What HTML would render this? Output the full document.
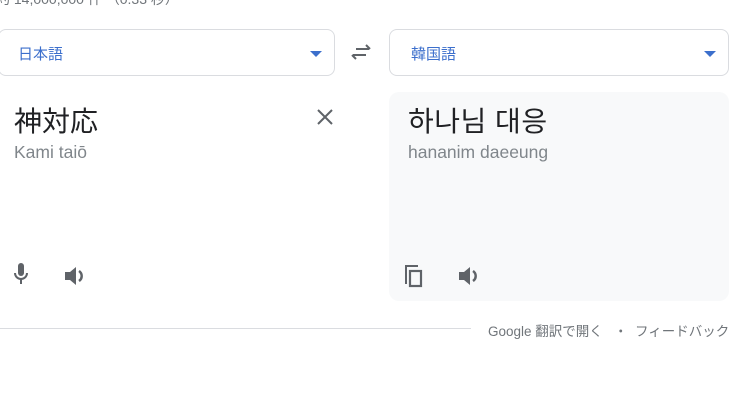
<!DOCTYPE html>
<html><head><meta charset="utf-8"><style>
body{margin:0;width:750px;height:404px;background:#fff;position:relative;overflow:hidden;font-family:"Liberation Sans","Noto Sans CJK JP",sans-serif;}
.a{position:absolute;}
.sel{position:absolute;top:29px;height:47px;border:1px solid #dadce0;border-radius:8px;box-sizing:border-box;}
.sel span{position:absolute;left:17px;top:13px;font-size:15px;color:#3c6fcc;}
.tri{position:absolute;right:12px;top:21px;width:0;height:0;border-left:6px solid transparent;border-right:6px solid transparent;border-top:6px solid #3c6fcc;}
</style></head><body>
<div class="a" style="left:-4px;top:-11px;font-size:14px;color:#70757a">約 14,000,000 件 （0.33 秒）</div>
<div class="sel" style="left:-2px;width:337px"><span style="left:19px">日本語</span><div class="tri"></div></div>
<div class="sel" style="left:389px;width:340px"><span style="left:21px">韓国語</span><div class="tri"></div></div>
<svg class="a" style="left:350px;top:42px" width="22" height="20" viewBox="0 0 22 20"><path d="M6 7h13M16 3l4 4M16 13H3M6 17l-4-4" stroke="#5f6368" stroke-width="2" fill="none"/></svg>
<div class="a" style="left:14px;top:100px;font-size:28px;color:#202124">神対応</div>
<div class="a" style="left:14px;top:142px;font-size:17.5px;color:#80868b">Kami taiō</div>
<svg class="a" style="left:316px;top:108px" width="18" height="18" viewBox="0 0 18 18"><path d="M2 2L16 16M16 2L2 16" stroke="#5f6368" stroke-width="2"/></svg>
<svg class="a" style="left:11px;top:262px" width="20" height="24" viewBox="0 0 20 24"><rect x="7" y="1" width="6" height="13" rx="3" fill="#5f6368"/><path d="M4 11a6 6 0 0 0 12 0" stroke="#5f6368" stroke-width="2" fill="none"/><path d="M10 17v5" stroke="#5f6368" stroke-width="2"/></svg>
<svg class="a" style="left:64px;top:265px" width="24" height="22" viewBox="0 0 24 22"><path d="M1 7h5l6-5v18l-6-5H1z" fill="#5f6368"/><path d="M15 6a6 6 0 0 1 0 10" stroke="#5f6368" stroke-width="2.5" fill="none"/></svg>
<div class="a" style="left:389px;top:92px;width:340px;height:209px;background:#f8f9fa;border-radius:10px"></div>
<div class="a" style="left:408px;top:100px;font-size:28px;color:#202124;letter-spacing:0.5px">하나님 대응</div>
<div class="a" style="left:408px;top:142px;font-size:17.5px;color:#80868b">hananim daeeung</div>
<svg class="a" style="left:403px;top:264px" width="22" height="24" viewBox="0 0 22 24"><path d="M3 20V2h12" stroke="#5f6368" stroke-width="2" fill="none"/><rect x="7" y="7" width="11" height="15" stroke="#5f6368" stroke-width="2.2" fill="none"/></svg>
<svg class="a" style="left:458px;top:265px" width="24" height="22" viewBox="0 0 24 22"><path d="M1 7h5l6-5v18l-6-5H1z" fill="#5f6368"/><path d="M15 6a6 6 0 0 1 0 10" stroke="#5f6368" stroke-width="2.5" fill="none"/></svg>
<div class="a" style="left:0;top:328px;width:471px;height:1px;background:#dadce0"></div>
<div class="a" style="left:488px;top:320px;font-size:13.5px;color:#70757a;white-space:nowrap">Google 翻訳で開く &nbsp;&nbsp;・&nbsp; フィードバック</div>
</body></html>
